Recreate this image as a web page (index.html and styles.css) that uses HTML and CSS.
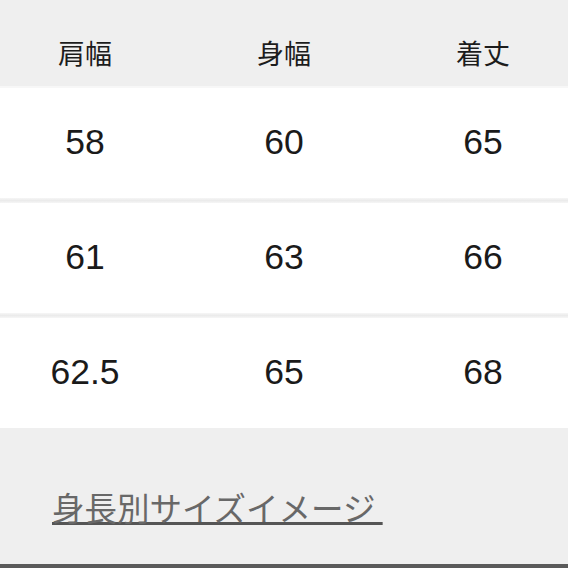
FILE: index.html
```html
<!DOCTYPE html>
<html lang="ja">
<head>
<meta charset="utf-8">
<link rel="stylesheet" href="styles.css">
</head>
<body>
<div class="sheet">
  <div class="row head">
    <div class="cell">肩幅</div>
    <div class="cell">身幅</div>
    <div class="cell">着丈</div>
  </div>
  <div class="row data">
    <div class="cell">58</div>
    <div class="cell">60</div>
    <div class="cell">65</div>
  </div>
  <div class="sep"></div>
  <div class="row data">
    <div class="cell">61</div>
    <div class="cell">63</div>
    <div class="cell">66</div>
  </div>
  <div class="sep"></div>
  <div class="row data">
    <div class="cell">62.5</div>
    <div class="cell">65</div>
    <div class="cell">68</div>
  </div>
  <div class="foot">
    <a class="link" href="#">身長別サイズイメージ&nbsp;</a>
  </div>
</div>
</body>
</html>
```
FILE: styles.css
```css
html, body {
  margin: 0;
  padding: 0;
  background: #ffffff;
}
.sheet {
  width: 568px;
  height: 568px;
  display: flex;
  flex-direction: column;
  overflow: hidden;
}
.row {
  display: grid;
  grid-template-columns: 170px 228px 170px;
  align-items: center;
  justify-items: center;
  flex-shrink: 0;
}
.head {
  height: 88px;
  box-sizing: border-box;
  padding-top: 18px;
  background: #efefef;
  border-bottom: 2px solid #f7f7f7;
  font-family: "Noto Sans CJK JP", sans-serif;
  font-size: 27px;
  color: #1c1c1c;
}
.data {
  height: 110px;
  box-sizing: border-box;
  padding-bottom: 2px;
  background: #ffffff;
  font-family: "Liberation Sans", Arial, sans-serif;
  font-size: 35.5px;
  color: #1a1a1a;
}
.sep {
  height: 5px;
  flex-shrink: 0;
  background: linear-gradient(#f6f6f6, #ebebeb 50%, #f6f6f6);
}
.foot {
  flex: 1;
  background: #efefef;
  border-bottom: 4px solid #5a5a5a;
  padding: 63px 0 0 52px;
}
.link {
  font-family: "Noto Sans CJK JP", sans-serif;
  font-size: 32.5px;
  color: #686868;
  text-decoration: underline;
  text-decoration-color: #555;
  text-decoration-thickness: 3px;
  text-underline-offset: 1px;
  line-height: 1;
}
```
